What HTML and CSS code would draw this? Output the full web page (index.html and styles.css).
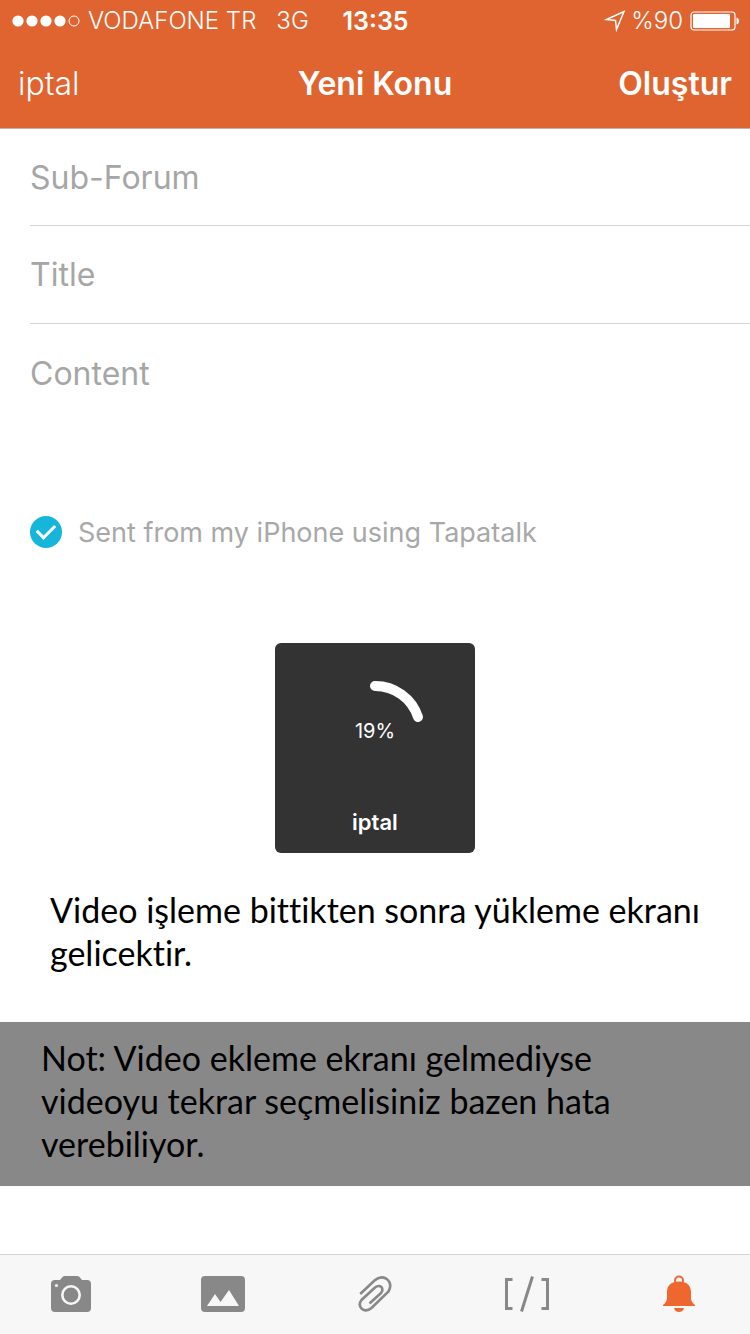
FILE: index.html
```html
<!DOCTYPE html>
<html lang="tr">
<head>
<meta charset="utf-8">
<meta name="viewport" content="width=device-width, initial-scale=1">
<title>Yeni Konu</title>
<link rel="stylesheet" href="styles.css">
</head>
<body>
<div class="screen">
  <header class="header">
    <div class="status">
      <div class="status-left">
        <svg class="signal" width="68" height="12" viewBox="0 0 68 12" aria-hidden="true">
          <g fill="#fff"><circle cx="6" cy="6" r="5.6"/><circle cx="20" cy="6" r="5.6"/><circle cx="34" cy="6" r="5.6"/><circle cx="48" cy="6" r="5.6"/></g>
          <circle cx="62" cy="6" r="5" fill="none" stroke="#fff" stroke-width="1"/>
        </svg>
        <span class="carrier">VODAFONE TR</span>
        <span>3G</span>
      </div>
      <span class="time">13:35</span>
      <div class="status-right">
        <svg width="22" height="22" viewBox="0 0 22 22" aria-hidden="true"><path d="M3.500 9.500 L21 1.500 L13.500 19.500 L12.500 10.500 Z" fill="none" stroke="#fff" stroke-width="1.5"/></svg>
        <span>%90</span>
        <svg width="50" height="20" viewBox="0 0 50 20" aria-hidden="true">
          <rect x="2" y="1" width="44" height="18" rx="3" fill="none" stroke="#fff" stroke-width="1.2"/>
          <rect x="4" y="3" width="37" height="14" rx="1" fill="#fff"/>
          <path d="M47.500 6.500 Q50 7 50 10 Q50 13 47.500 13.500 Z" fill="#fff"/>
        </svg>
      </div>
    </div>
    <nav class="nav">
      <button class="nav-button" type="button">iptal</button>
      <h1 class="nav-title">Yeni Konu</h1>
      <button class="nav-button nav-button-main" type="button">Oluştur</button>
    </nav>
  </header>

  <main class="main">
    <form class="form">
      <input class="field field-first" type="text" placeholder="Sub-Forum" aria-label="Sub-Forum">
      <input class="field" type="text" placeholder="Title" aria-label="Title">
      <textarea class="field field-content" placeholder="Content" aria-label="Content"></textarea>
      <label class="signature"><input class="check" type="checkbox" checked>Sent from my iPhone using Tapatalk</label>
    </form>

    <section class="upload" aria-label="19%">
      <div class="progress">
        <svg class="ring" width="110" height="110" viewBox="0 0 110 110" aria-hidden="true"><path d="M55 10 A45 45 0 0 1 98 41" fill="none" stroke="#fff" stroke-width="10" stroke-linecap="round"/></svg>
        <span class="percent">19%</span>
      </div>
      <button class="upload-cancel" type="button">iptal</button>
    </section>

    <p class="caption">Video işleme bittikten sonra yükleme ekranı gelicektir.</p>
    <p class="note">Not: Video ekleme ekranı gelmediyse<br>videoyu tekrar seçmelisiniz bazen hata<br>verebiliyor.</p>
  </main>

  <footer class="toolbar">
    <button class="tool" type="button" aria-label="Kamera">
      <svg width="44" height="40" viewBox="0 0 44 40"><path fill="#888" d="M6 6 H11 L13.500 3 Q14.300 2 16 2 H28 Q29.700 2 30.500 3 L33 6 H38 Q42 6 42 10 V34 Q42 38 38 38 H6 Q2 38 2 34 V10 Q2 6 6 6 Z"/><circle cx="22" cy="21" r="8.700" fill="none" stroke="#f7f7f7" stroke-width="2.600"/><circle cx="7.500" cy="11.500" r="1.600" fill="#f7f7f7"/></svg>
    </button>
    <button class="tool" type="button" aria-label="Resim">
      <svg width="44" height="40" viewBox="0 0 44 40"><rect x="0" y="2" width="44" height="36" rx="4" fill="#888"/><path fill="#f7f7f7" d="M6 32 L14 20 L19.500 28 L28 16 L38 32 Z"/></svg>
    </button>
    <button class="tool" type="button" aria-label="Dosya">
      <svg width="44" height="40" viewBox="0 0 44 40"><path fill="none" stroke="#888" stroke-width="2.600" d="M8.200 20 L22.500 6.500 Q28 1.500 34 4.500 Q41 9.500 36.500 17.500 L19.500 34 Q14 38.500 9.500 34.500 Q6 30.500 9.500 26 L23 13.500 Q26.500 10.800 29.400 13 Q31.500 16 29 19 L17.500 29.500"/></svg>
    </button>
    <button class="tool" type="button" aria-label="BBCode">
      <svg width="46" height="40" viewBox="0 0 46 40"><path fill="none" stroke="#888" stroke-width="3" d="M8.500 5.500 H2.500 V34.500 H8.500 M37.500 5.500 H43.500 V34.500 H37.500 M28.500 2.500 L17.500 37.500"/></svg>
    </button>
    <button class="tool" type="button" aria-label="Bildirim">
      <svg width="44" height="40" viewBox="0 0 44 40"><circle cx="22" cy="6.500" r="4" fill="none" stroke="#ed672f" stroke-width="2"/><path fill="#ed672f" d="M22 7.500 C29.500 7.500 34 11.500 34 18 V24 Q34 28 38 31 V32 H6 V31 Q10 28 10 24 V18 C10 11.500 14.500 7.500 22 7.500 Z M17 34 H27 Q26 38 22 38 Q18 38 17 34 Z"/></svg>
    </button>
  </footer>
</div>
</body>
</html>
```

FILE: styles.css
```css
* { box-sizing: border-box; }

body {
  margin: 0;
  background: #fff;
  font-family: Inter, "Liberation Sans", sans-serif;
}

button {
  border: 0;
  padding: 0;
  background: none;
  color: inherit;
  font-family: inherit;
}

svg { display: block; }

.screen {
  display: flex;
  flex-direction: column;
  min-height: 100vh;
}

.header {
  background: #df6430;
  color: #fff;
  border-bottom: 1px solid #c0b0a8;
}

.status {
  display: grid;
  grid-template-columns: 1fr auto 1fr;
  align-items: center;
  height: 41px;
  padding: 0 11px 0 12px;
  font-size: 24px;
  font-weight: 300;
}

.status-left,
.status-right {
  display: flex;
  align-items: center;
  gap: 8px;
}

.status-right {
  justify-content: flex-end;
  gap: 6px;
}

.carrier { margin-right: 12px; }

.time {
  font-size: 25px;
  font-weight: 600;
}

.nav {
  display: grid;
  grid-template-columns: 1fr auto 1fr;
  align-items: center;
  height: 87px;
  padding: 0 18px 2px;
}

.nav-button {
  justify-self: start;
  font-size: 32px;
  font-weight: 300;
}

.nav-button-main {
  justify-self: end;
  font-weight: 600;
}

.nav-title {
  margin: 0;
  font-size: 32px;
  font-weight: 600;
}

.main { flex: 1; }

.form { padding-left: 30px; }

.field {
  display: block;
  width: 100%;
  height: 98px;
  padding: 0;
  border: 0;
  border-bottom: 1px solid #d4d6d6;
  border-radius: 0;
  background: none;
  outline: none;
  font-family: inherit;
  font-size: 32px;
  font-weight: 400;
}

.field::placeholder {
  color: #a6a6a6;
  opacity: 1;
}

.field-first { height: 97px; }

.field-content {
  height: 160px;
  padding-top: 28px;
  border-bottom: 0;
  line-height: 44px;
  resize: none;
}

.signature {
  display: flex;
  align-items: center;
  gap: 16px;
  height: 96px;
  color: #a8a8a8;
  font-size: 27px;
  font-weight: 400;
}

.check {
  appearance: none;
  display: grid;
  place-items: center;
  width: 32px;
  height: 32px;
  margin: 0;
  border-radius: 50%;
  background: #16b5da;
}

.check::after {
  content: "";
  width: 15px;
  height: 8px;
  margin-bottom: 5px;
  border: solid #fff;
  border-width: 0 0 3px 3px;
  transform: rotate(-45deg);
}

.upload {
  display: flex;
  flex-direction: column;
  align-items: center;
  justify-content: space-between;
  width: 200px;
  height: 210px;
  margin: 63px auto 35px;
  padding: 33px 0 17px;
  border-radius: 6px;
  background: #333;
  color: #fff;
}

.progress {
  display: grid;
  place-items: center;
}

.ring,
.percent { grid-area: 1 / 1; }

.percent {
  font-size: 20px;
  font-weight: 400;
}

.upload-cancel {
  font-size: 22px;
  font-weight: 600;
  line-height: 28px;
}

.caption,
.note {
  margin: 0;
  color: #000;
  font-family: Lato, "Open Sans", sans-serif;
  font-size: 34px;
  font-variant-ligatures: none;
  line-height: 43px;
}

.caption { padding: 0 40px 48px 50px; }

.note {
  padding: 14px 40px 21px 41px;
  background: #888889;
}

.toolbar {
  display: flex;
  align-items: center;
  justify-content: space-between;
  height: 80px;
  padding: 0 49px 2px;
  border-top: 1px solid #d6d6d6;
  background: #f7f7f7;
}
```
